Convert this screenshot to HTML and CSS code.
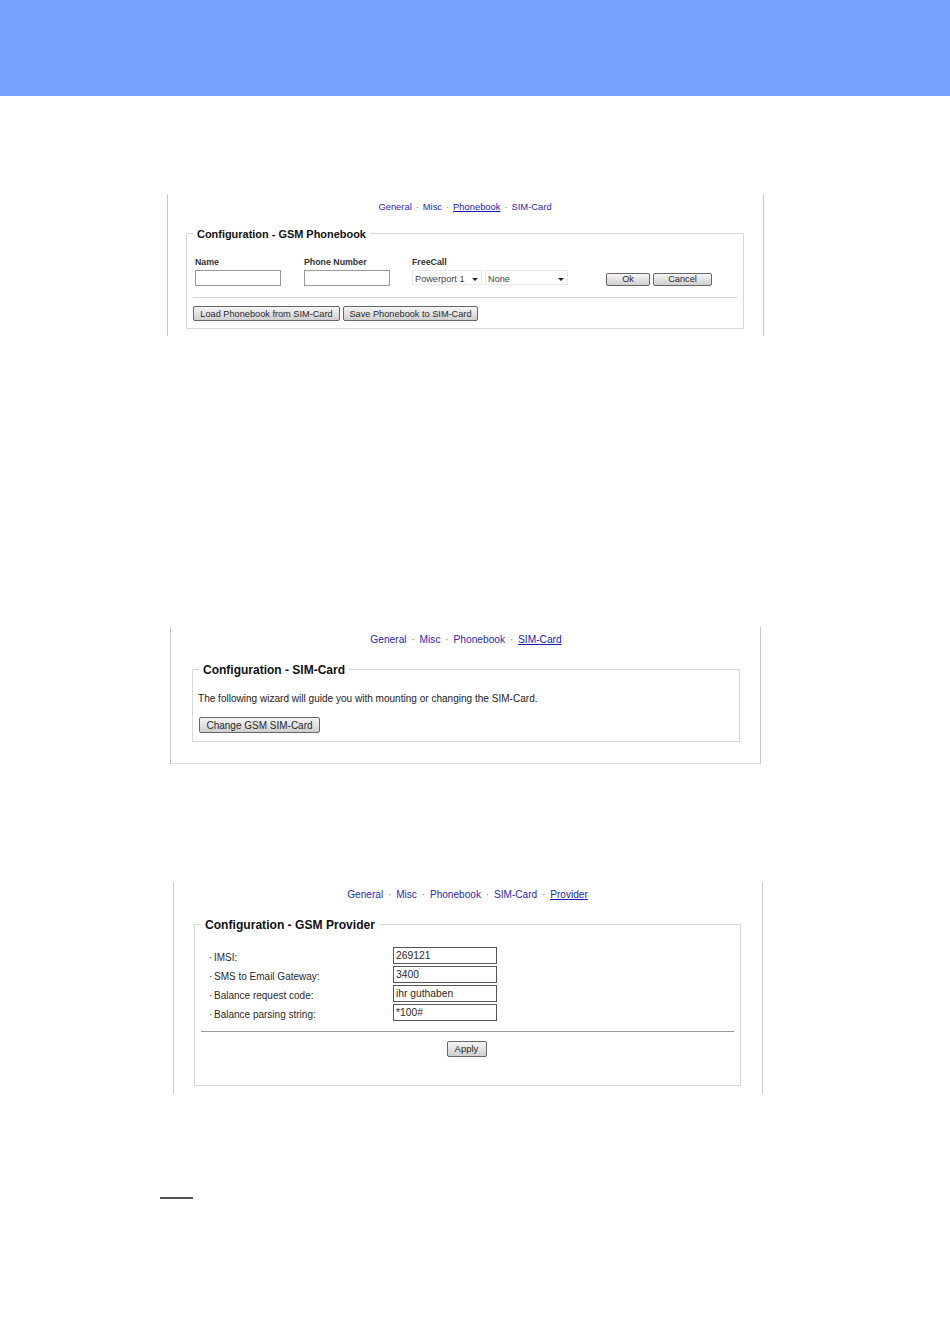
FILE: index.html
```html
<!DOCTYPE html>
<html lang="en">
<head>
<meta charset="utf-8">
<title>GSM Configuration</title>
<link rel="stylesheet" href="styles.css">
</head>
<body>
<header class="banner"></header>

<section class="panel panel-phonebook">
  <nav class="tabs">
    <a>General</a><span class="dot">·</span><a>Misc</a><span class="dot">·</span><a class="active">Phonebook</a><span class="dot">·</span><a>SIM-Card</a>
  </nav>
  <div class="box">
    <h2 class="legend">Configuration - GSM Phonebook</h2>
    <div class="entry">
      <div class="field name-field"><label>Name</label><div class="input"></div></div>
      <div class="field phone-field"><label>Phone Number</label><div class="input"></div></div>
      <div class="field free-field"><label>FreeCall</label>
        <div class="selects">
          <div class="select port">Powerport 1<i class="caret"></i></div>
          <div class="select none">None<i class="caret"></i></div>
        </div>
      </div>
      <div class="entry-actions"><button class="btn ok">Ok</button><button class="btn cancel">Cancel</button></div>
    </div>
    <hr class="rule">
    <div class="book-actions"><button class="btn load">Load Phonebook from SIM-Card</button><button class="btn save">Save Phonebook to SIM-Card</button></div>
  </div>
</section>

<section class="panel panel-sim">
  <nav class="tabs">
    <a>General</a><span class="dot">·</span><a>Misc</a><span class="dot">·</span><a>Phonebook</a><span class="dot">·</span><a class="active">SIM-Card</a>
  </nav>
  <div class="box">
    <h2 class="legend">Configuration - SIM-Card</h2>
    <p class="wizard">The following wizard will guide you with mounting or changing the SIM-Card.</p>
    <button class="btn change">Change GSM SIM-Card</button>
  </div>
</section>

<section class="panel panel-provider">
  <nav class="tabs">
    <a>General</a><span class="dot">·</span><a>Misc</a><span class="dot">·</span><a>Phonebook</a><span class="dot">·</span><a>SIM-Card</a><span class="dot">·</span><a class="active">Provider</a>
  </nav>
  <div class="box">
    <h2 class="legend">Configuration - GSM Provider</h2>
    <div class="form">
      <div class="row"><span class="row-label"><b class="bullet">·</b>IMSI:</span><div class="value">269121</div></div>
      <div class="row"><span class="row-label"><b class="bullet">·</b>SMS to Email Gateway:</span><div class="value">3400</div></div>
      <div class="row"><span class="row-label"><b class="bullet">·</b>Balance request code:</span><div class="value">ihr guthaben</div></div>
      <div class="row"><span class="row-label"><b class="bullet">·</b>Balance parsing string:</span><div class="value">*100#</div></div>
    </div>
    <hr class="rule dark">
    <div class="apply-row"><button class="btn apply">Apply</button></div>
  </div>
</section>

<div class="footnote-rule"></div>
</body>
</html>
```
FILE: styles.css
```css
* { box-sizing: border-box; }
html, body { margin: 0; padding: 0; }
body { width: 950px; height: 1344px; background: #fff; font-family: "Liberation Sans", Arial, sans-serif; color: #222; overflow: hidden; }

.banner { height: 96px; background: #75a3ff; }

.panel { border-left: 1px solid #c8c8c8; border-right: 1px solid #c8c8c8; }
.panel-phonebook { width: 597px; height: 142px; margin: 98px 0 0 167px; padding: 7px 19px 0 18px; font-size: 9.4px; }
.panel-sim { width: 591px; height: 137px; margin: 291px 0 0 170px; padding: 7px 20px 0 21px; font-size: 10.2px; border-bottom: 1px solid #dcdcdc; }
.panel-provider { width: 590px; height: 212px; margin: 118px 0 0 173px; padding: 7px 21px 0 20px; font-size: 10.1px; }

.tabs { display: flex; justify-content: center; line-height: 12px; height: 12px; }
.tabs a { color: #2a2ab4; }
.tabs a.active { color: #1a1ab0; text-decoration: underline; }
.tabs .dot { color: #777; width: 13px; text-align: center; }
.panel-phonebook .tabs .dot { width: 11px; }

.box { border: 1px solid #d8d8d8; position: relative; }
.panel-phonebook .box { margin-top: 20px; height: 96px; padding: 23px 6px 0 6px; }
.panel-sim .box { margin-top: 23px; height: 73px; padding: 23px 5px 0 5px; }
.panel-provider .box { margin-top: 23px; height: 162px; padding: 22px 6px 0 6px; }

.legend { position: absolute; left: 6px; margin: 0; padding: 0 4px; background: #fff; font-weight: bold; color: #111; }
.panel-phonebook .legend { top: -6px; font-size: 10.95px; line-height: 13px; }
.panel-sim .legend { top: -7px; font-size: 12px; line-height: 14px; }
.panel-provider .legend { top: -7px; font-size: 12.1px; line-height: 14px; }

.entry { display: flex; align-items: flex-start; padding-left: 2px; height: 30px; }
.field label { display: block; font-weight: bold; font-size: 8.8px; line-height: 10px; color: #333; margin-bottom: 3px; }
.name-field { width: 109px; }
.phone-field { width: 108px; }
.free-field { width: 194px; }
.input { width: 86px; height: 16px; border: 1px solid #999; background: #fff; }
.selects { display: flex; gap: 3px; margin-top: 1px; }
.select { height: 15px; border: 1px solid #e8e8e8; line-height: 12px; padding: 2px 0 0 2px; color: #444; position: relative; font-size: 9.2px; }
.select.port { width: 70px; }
.select.none { width: 83px; }
.caret { position: absolute; right: 3px; top: 7px; border-left: 3px solid transparent; border-right: 3px solid transparent; border-top: 3px solid #222; }
.entry-actions { display: flex; gap: 3px; margin-top: 16px; }

.btn { display: block; margin: 0; padding: 0; font-family: inherit; border: 1px solid #666; border-radius: 2px; background: linear-gradient(#f6f6f6, #cfcfcf); color: #2a2a2a; text-align: center; }
.ok, .cancel { height: 13px; font-size: 9.2px; line-height: 11px; }
.ok { width: 44px; }
.cancel { width: 59px; }
.book-actions { display: flex; gap: 3px; }
.load, .save { height: 15px; font-size: 9.2px; line-height: 13px; padding-top: 1px; }
.load { width: 147px; }
.save { width: 135px; }

.rule { border: 0; height: 1px; background: #d4d4d4; margin: 0; }
.panel-phonebook .rule { margin: 10px 0 8px 0; }
.rule.dark { background: #999; margin: 10px 0 0 0; }

.wizard { margin: 0; font-size: 10.05px; line-height: 12px; color: #222; }
.change { margin: 12px 0 0 1px; width: 121px; height: 16px; padding-top: 1px; font-size: 10px; line-height: 13px; }

.form { padding-left: 2px; display: flex; flex-direction: column; gap: 2px; }
.row { display: flex; align-items: center; height: 17px; }
.row-label { width: 190px; padding: 4px 0 0 6px; font-size: 10px; line-height: 12px; color: #2a2a2a; }
.bullet { display: inline-block; width: 5px; font-weight: normal; }
.value { width: 104px; height: 17px; border: 1px solid #555; padding-left: 2px; line-height: 15px; font-size: 10.3px; color: #2a2a2a; }
.apply-row { display: flex; justify-content: center; margin-top: 9px; padding-right: 2px; }
.apply { width: 40px; height: 16px; font-size: 9.5px; line-height: 14px; }

.footnote-rule { width: 33px; height: 2px; background: #555; margin: 103px 0 0 160px; }
```
